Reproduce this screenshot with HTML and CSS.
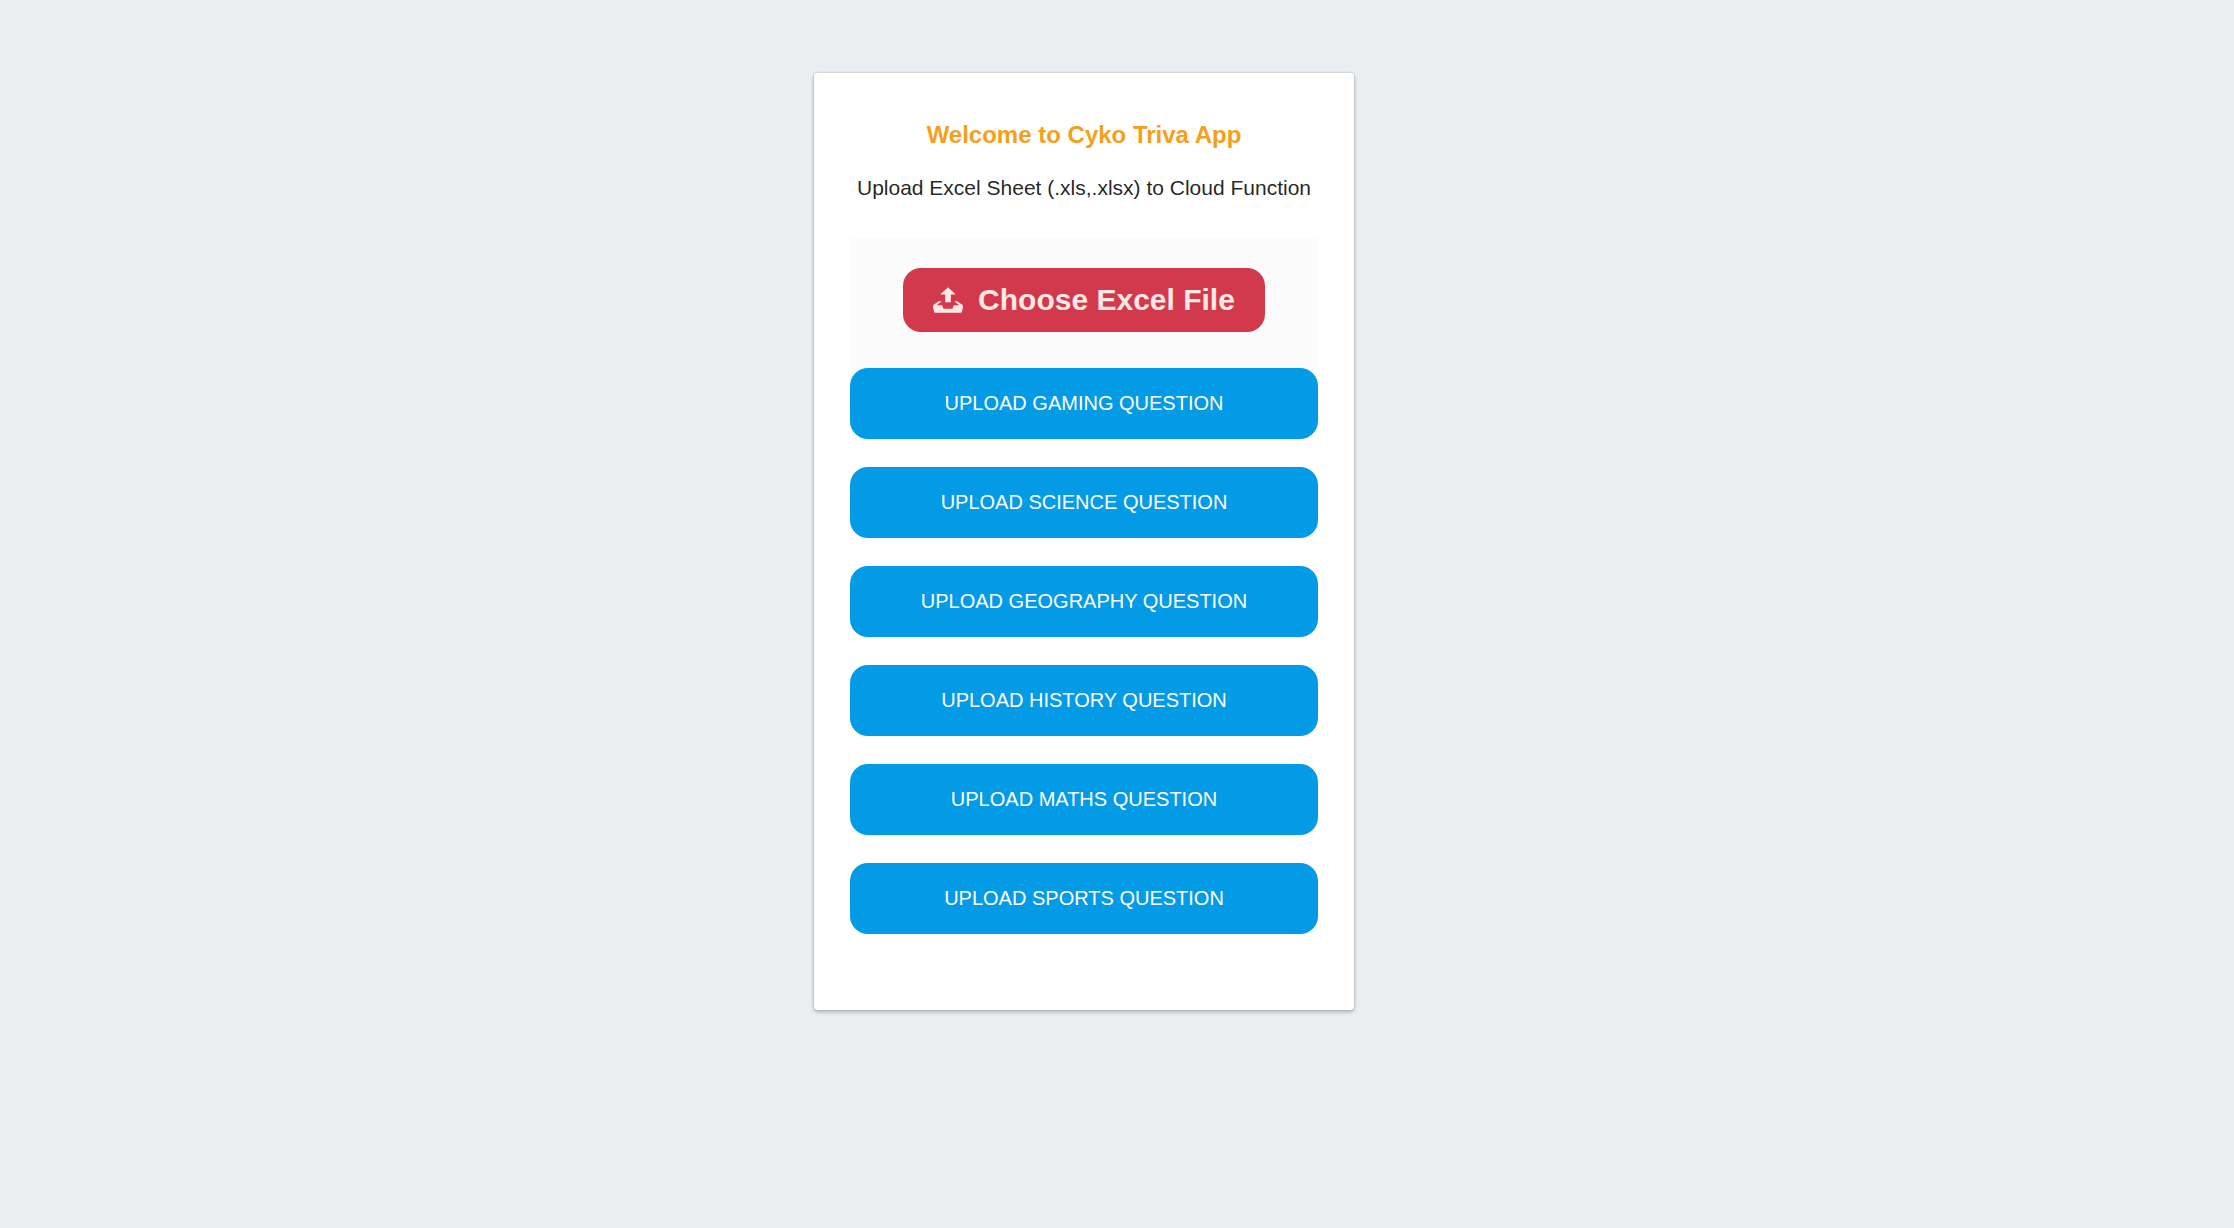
FILE: index.html
```html
<!DOCTYPE html>
<html lang="en">
<head>
    <meta charset="UTF-8">
    <meta name="viewport" content="width=device-width, initial-scale=1">
    <title>Cyko Triva App</title>
    <link rel="stylesheet" href="styles.css">
</head>
<body>
    <main class="card">
        <h2 class="title">Welcome to Cyko Triva App</h2>
        <p class="message">Upload Excel Sheet (.xls,.xlsx) to Cloud Function</p>

        <form id="uploadForm">
            <div class="file-box">
                <input type="file" id="excelFile" name="excelFile" class="file-input" accept=".xls,.xlsx">
                <label for="excelFile" class="file-label">
                    <svg class="file-icon" viewBox="0 0 20 17" aria-hidden="true">
                        <path d="M10 0l-5.2 4.9h3.3v5.1h3.8v-5.1h3.3l-5.2-4.9zm9.3 11.5l-3.2-2.1h-2l3.4 2.6h-3.5c-.1 0-.2.1-.2.1l-.8 2.3h-6l-.8-2.2c-.1-.1-.1-.2-.2-.2h-3.6l3.4-2.6h-2l-3.2 2.1c-.4.3-.7 1-.6 1.5l.6 3.1c.1.5.7.9 1.2.9h16.3c.6 0 1.1-.4 1.3-.9l.6-3.1c.1-.5-.2-1.2-.7-1.5z"/>
                    </svg>
                    <span>Choose Excel File</span>
                </label>
            </div>

            <div class="upload-buttons">
                <button type="button" class="upload-button">Upload Gaming Question</button>
                <button type="button" class="upload-button">Upload Science Question</button>
                <button type="button" class="upload-button">Upload Geography Question</button>
                <button type="button" class="upload-button">Upload History Question</button>
                <button type="button" class="upload-button">Upload Maths Question</button>
                <button type="button" class="upload-button">Upload Sports Question</button>
            </div>
        </form>
    </main>
</body>
</html>
```
FILE: styles.css
```css
* {
    box-sizing: border-box;
}

body {
    margin: 0;
    padding: 73px 66px 73px 0;
    background-color: #eaeef1;
    color: rgba(0, 0, 0, 0.87);
    font-family: Arial, "Liberation Sans", sans-serif;
    font-size: 20px;
}

.card {
    max-width: 540px;
    margin: 0 auto;
    padding: 44px 36px 76px;
    background-color: #fff;
    border-radius: 4px;
    text-align: center;
    box-shadow: 0 2px 4px rgba(0, 0, 0, 0.24), 0 0 3px rgba(0, 0, 0, 0.16);
}

.title {
    margin: 0 0 20px;
    color: #f4a01c;
    font-size: 24px;
    line-height: 36px;
}

.message {
    margin: 0 0 34px;
    font-size: 21px;
    line-height: 30px;
}

.file-box {
    padding: 31px 0 36px;
    background-color: #fbfbfb;
}

/* the label below stands in for the native file control */
.file-input {
    width: 1px;
    height: 1px;
    opacity: 0;
    overflow: hidden;
    position: absolute;
    z-index: -1;
}

.file-label {
    display: inline-flex;
    align-items: center;
    gap: 15px;
    padding: 14px 30px;
    border-radius: 18px;
    background-color: #d3394c;
    color: #ffe7e5;
    font-size: 30px;
    font-weight: bold;
    line-height: 36px;
    vertical-align: top;
    cursor: pointer;
}

.file-icon {
    width: 30px;
    height: 26px;
    fill: currentColor;
}

.upload-buttons {
    display: flex;
    flex-direction: column;
    gap: 28px;
}

.upload-button {
    padding: 20px;
    border: none;
    border-radius: 18px;
    background-color: #039be5;
    color: #fff;
    font-family: inherit;
    font-size: 20px;
    line-height: 31px;
    text-transform: uppercase;
    cursor: pointer;
}

.file-label:hover {
    background-color: #b92c3d;
}

.upload-button:hover {
    background-color: #0288d1;
}
```
